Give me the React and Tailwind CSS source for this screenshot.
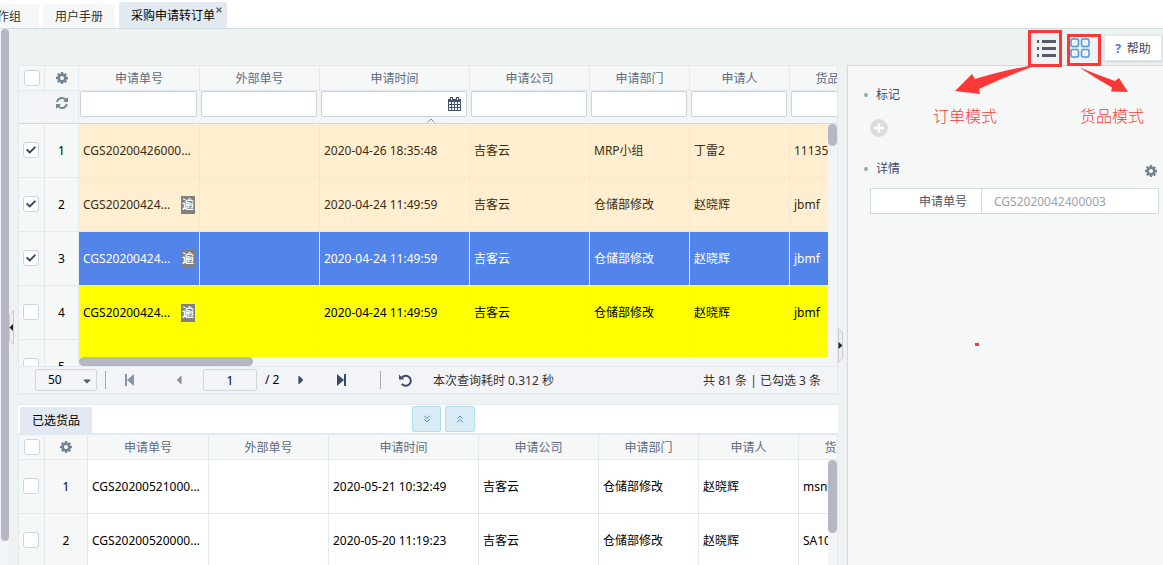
import { useState } from 'react'
import clsx from 'clsx'
import { FaCheck, FaCaretLeft, FaCaretRight, FaCaretDown, FaTimes } from 'react-icons/fa'
import { FiChevronsDown, FiChevronsUp } from 'react-icons/fi'

const COLUMNS = [
  { key: 'no', label: '申请单号', width: 'w-[121px]' },
  { key: 'outer', label: '外部单号', width: 'w-[120px]' },
  { key: 'time', label: '申请时间', width: 'w-[150px]', date: true },
  { key: 'company', label: '申请公司', width: 'w-[120px]' },
  { key: 'dept', label: '申请部门', width: 'w-[100px]' },
  { key: 'person', label: '申请人', width: 'w-[100px]' },
  { key: 'goods', label: '货品编号', width: 'w-[100px]' },
]

const ORDERS = [
  { no: 'CGS20200426000...', time: '2020-04-26 18:35:48', company: '吉客云', dept: 'MRP小组', person: '丁雷2', goods: '11135', checked: true, tone: 'bg-[#ffeecf] text-[#3d2c10]' },
  { no: 'CGS20200424...', time: '2020-04-24 11:49:59', company: '吉客云', dept: '仓储部修改', person: '赵晓辉', goods: 'jbmf', checked: true, overdue: true, tone: 'bg-[#ffeecf] text-[#3d2c10]' },
  { no: 'CGS20200424...', time: '2020-04-24 11:49:59', company: '吉客云', dept: '仓储部修改', person: '赵晓辉', goods: 'jbmf', checked: true, overdue: true, tone: 'bg-[#5284ea] text-white' },
  { no: 'CGS20200424...', time: '2020-04-24 11:49:59', company: '吉客云', dept: '仓储部修改', person: '赵晓辉', goods: 'jbmf', overdue: true, tone: 'bg-[#ffff00] text-black' },
  { tone: 'bg-[#ffff00] text-black' },
]

const SELECTED = [
  { no: 'CGS20200521000...', time: '2020-05-21 10:32:49', company: '吉客云', dept: '仓储部修改', person: '赵晓辉', goods: 'msnf', tone: 'bg-white text-black' },
  { no: 'CGS20200520000...', time: '2020-05-20 11:19:23', company: '吉客云', dept: '仓储部修改', person: '赵晓辉', goods: 'SA10', tone: 'bg-white text-black' },
]

function GearIcon({ className }) {
  return (
    <svg viewBox="128 128 1536 1536" fill="currentColor" className={className} aria-hidden="true">
      <path d="M1152 896q0-106-75-181t-181-75-181 75-75 181 75 181 181 75 181-75 75-181zm512-109v222q0 12-8 23t-20 13l-185 28q-19 54-39 91 35 50 107 138 10 12 10 25t-9 23q-27 37-99 108t-94 71q-12 0-26-9l-138-108q-44 23-91 38-16 136-29 186-7 28-36 28h-222q-14 0-24.5-8.5t-11.5-21.5l-28-184q-49-16-90-37l-141 107q-10 9-25 9-14 0-25-11-126-114-165-168-7-10-7-23 0-12 8-23 15-21 51-66.5t54-70.5q-27-50-41-99l-183-27q-13-2-21-12.5t-8-23.5v-222q0-12 8-23t19-13l186-28q14-46 39-92-40-57-107-138-10-12-10-24 0-10 9-23 26-36 98.5-107.5t94.5-71.5q13 0 26 10l138 107q44-23 91-38 16-136 29-186 7-28 36-28h222q14 0 24.5 8.5t11.5 21.5l28 184q49 16 90 37l142-107q9-9 24-9 13 0 25 10 129 119 165 170 7 8 7 22 0 12-8 23-15 21-51 66.5t-54 70.5q26 50 41 98l183 28q13 2 21 12.5t8 23.5z" />
    </svg>
  )
}

function RefreshIcon({ className }) {
  return (
    <svg viewBox="0 128 1536 1536" fill="currentColor" className={className} aria-hidden="true">
      <path d="M1511 1056q0 5-1 7-64 268-268 434.5t-478 166.5q-146 0-282.5-55t-243.5-157l-129 129q-19 19-45 19t-45-19-19-45v-448q0-26 19-45t45-19h448q26 0 45 19t19 45-19 45l-137 137q71 66 161 102t187 36q134 0 250-65t186-179q11-17 53-117 8-23 30-23h192q13 0 22.5 9.5t9.5 22.5zm25-800v448q0 26-19 45t-45 19h-448q-26 0-45-19t-19-45 19-45l138-138q-148-137-349-137-134 0-250 65t-186 179q-11 17-53 117-8 23-30 23h-199q-13 0-22.5-9.5t-9.5-22.5v-7q65-268 270-434.5t480-166.5q146 0 284 55.5t245 156.5l130-129q19-19 45-19t45 19 19 45z" />
    </svg>
  )
}

function CalendarIcon() {
  return (
    <svg viewBox="0 0 13 14" className="w-[13px] h-[14px]" aria-hidden="true">
      <path d="M0 2h13v12H0z" fill="#43506b" />
      <path d="M2 0h3v4H2zM8 0h3v4H8z" fill="#43506b" />
      <path d="M3 1h1v2H3zM9 1h1v2H9z" fill="#fff" />
      <path d="M1 5h2v2H1zM4 5h2v2H4zM7 5h2v2H7zM10 5h2v2h-2zM1 8h2v2H1zM4 8h2v2H4zM7 8h2v2H7zM10 8h2v2h-2zM1 11h2v2H1zM4 11h2v2H4zM7 11h2v2H7zM10 11h2v2h-2z" fill="#fff" />
    </svg>
  )
}

function CheckBox({ label, defaultChecked }) {
  return (
    <label className="inline-grid align-middle">
      <input
        type="checkbox"
        aria-label={label}
        defaultChecked={defaultChecked}
        className="peer col-start-1 row-start-1 w-4 h-4 appearance-none rounded-[3px] border border-[#cbd6da] bg-white"
      />
      <FaCheck className="col-start-1 row-start-1 place-self-center w-2.5 h-2.5 text-[#3d4a66] invisible peer-checked:visible pointer-events-none" />
    </label>
  )
}

function Grid({ name, rows, indexWidth, tableWidth, filters }) {
  return (
    <table className={clsx('table-fixed border-separate border-spacing-0', tableWidth)}>
      <thead className="text-[#5f6b7f]">
        <tr className="h-[25px] bg-[#f6f8f8]">
          <th className="w-[26px] p-0 border-r border-b border-[#e1eaf2] leading-none">
            <CheckBox label={`${name}全选`} />
          </th>
          <th className={clsx('p-0 border-r border-b border-[#e1eaf2]', indexWidth)}>
            <button aria-label="列设置" className="block mx-auto text-[#738491]">
              <GearIcon className="w-3 h-3" />
            </button>
          </th>
          {COLUMNS.map((col) => (
            <th key={col.key} className={clsx('p-0 pt-0.5 border-r border-b border-[#e1eaf2] font-normal leading-4', col.width)}>
              {col.label}
            </th>
          ))}
        </tr>
        {filters && (
          <tr className="h-[33px] bg-[#f3f4f7]">
            <td className="p-0 border-b border-[#cfd9dd]" />
            <td className="p-0 pb-2 border-r border-b border-r-[#e1eaf2] border-b-[#cfd9dd]">
              <button aria-label="刷新" className="block mx-auto text-[#738491]">
                <RefreshIcon className="w-3 h-3" />
              </button>
            </td>
            {COLUMNS.map((col) => (
              <td key={col.key} className="p-0 pl-px pr-[3px] align-top border-b border-[#cfd9dd]">
                <div className="relative">
                  <input
                    aria-label={`筛选${col.label}`}
                    className="block w-full h-[26px] px-1 rounded-xs border border-[#c9d6d9] bg-white"
                  />
                  {col.date && (
                    <button aria-label="选择日期" className="absolute right-1.5 top-1.5">
                      <CalendarIcon />
                    </button>
                  )}
                </div>
              </td>
            ))}
          </tr>
        )}
      </thead>
      <tbody>
        {rows.map((row, i) => (
          <tr key={i} className={clsx('h-[54px]', row.tone)}>
            <td className="p-0 pr-0.5 pb-0.5 text-center border-r border-b border-[#e1eaf2] bg-[#f6f8f8] leading-none">
              <CheckBox label={`选择第${i + 1}行`} defaultChecked={row.checked} />
            </td>
            <td className="p-0 text-center border-r border-b border-[#e1eaf2] bg-[#f6f8f8] text-black">{i + 1}</td>
            {COLUMNS.map((col) => (
              <td key={col.key} className="p-0 px-1 border-r border-b border-[#e1eaf2] whitespace-nowrap">
                {col.key === 'no' && row.overdue ? (
                  <div className="flex items-center justify-between">
                    <span>{row.no}</span>
                    <span className="w-3.5 h-[18px] leading-[18px] text-center font-bold text-white bg-[#808080]">逾</span>
                  </div>
                ) : (
                  row[col.key]
                )}
              </td>
            ))}
          </tr>
        ))}
      </tbody>
    </table>
  )
}

function TabBar() {
  return (
    <nav className="flex items-end h-[29px] shrink-0 overflow-hidden bg-white border-b border-[#cfdadd]">
      <button className="h-6 pt-0.5 -ml-1 pl-px pr-[18px] mr-1 bg-[#f6f8f8] text-[#333]">作组</button>
      <button className="h-6 pt-0.5 px-3 mr-1 bg-[#f6f8f8] text-[#333]">用户手册</button>
      <div className="relative h-[26px] pt-0.5 px-3 flex items-center rounded-t-xs bg-[#e3e9f0] text-black">
        <button>采购申请转订单</button>
        <button aria-label="关闭" className="absolute right-1 top-1 text-[#5d6b78]">
          <FaTimes className="w-2 h-2" />
        </button>
      </div>
    </nav>
  )
}

function Toolbar() {
  return (
    <div className="flex items-start justify-end h-9 shrink-0">
      <button aria-label="订单模式" className="w-[34px] h-[37px] mt-px mr-[5px] pl-0.5 pb-0.5 grid place-items-center border-3 border-[#fb3838] relative z-10">
        <svg viewBox="0 0 19 18" className="w-[19px] h-[18px]" fill="#525c66">
          <path d="M0 1h2v3H0zM5 1h14v3H5zM0 8h2v3H0zM5 8h14v3H5zM0 15h2v3H0zM5 15h14v3H5z" />
        </svg>
      </button>
      <button aria-label="货品模式" className="w-[34px] h-8 mt-[5px] mr-[3px] pr-2 pb-1 grid place-items-center border-3 border-[#fb3838] relative z-10">
        <svg viewBox="0 0 20 20" className="w-5 h-5" fill="none" stroke="#4a97dc" strokeWidth="1.5">
          <rect x="1" y="1" width="7.5" height="7.5" rx="1.5" />
          <rect x="11.5" y="1" width="7.5" height="7.5" rx="1.5" />
          <rect x="1" y="11.5" width="7.5" height="7.5" rx="1.5" />
          <rect x="11.5" y="11.5" width="7.5" height="7.5" rx="1.5" />
        </svg>
      </button>
      <button className="flex items-center justify-center gap-1.5 w-[58px] h-[26px] pt-0.5 mt-1.5 mr-px bg-white border border-[#dfe6e9] shadow-sm text-[#3f4a55]">
        <span className="font-bold text-[#4a76e8]">?</span>
        帮助
      </button>
    </div>
  )
}

function Pager() {
  return (
    <div className="flex items-center h-[26px] pl-4 pr-4 bg-[#f3f4f7] text-[#333]">
      <div className="relative">
        <select aria-label="每页条数" className="block appearance-none w-[62px] h-[22px] pl-3 rounded-xs border border-[#cfd9dd] bg-transparent text-black">
          <option>50</option>
        </select>
        <FaCaretDown className="absolute right-1 top-1.5 w-3 h-3 text-[#525c66] pointer-events-none" />
      </div>
      <span className="w-px h-[18px] ml-2 bg-[#a4a9b3]" />
      <button aria-label="首页" className="w-6 ml-[11px] grid place-items-center text-[#8b93a5]">
        <svg viewBox="0 0 9 12" className="w-[9px] h-3" fill="currentColor">
          <path d="M0 0h2v12H0zM9 0v12L2 6z" />
        </svg>
      </button>
      <button aria-label="上一页" className="w-6 ml-[26px] grid place-items-center text-[#8b93a5]">
        <FaCaretLeft className="w-3 h-3.5" />
      </button>
      <input aria-label="页码" defaultValue="1" className="w-[54px] h-[22px] ml-3 text-center text-black rounded-xs border border-[#cfd9dd]" />
      <span className="w-4 ml-2 whitespace-nowrap text-black">/ 2</span>
      <button aria-label="下一页" className="w-6 ml-2 grid place-items-center text-[#3d4a66]">
        <FaCaretRight className="w-3 h-3.5" />
      </button>
      <button aria-label="末页" className="w-6 ml-4 grid place-items-center text-[#3d4a66]">
        <svg viewBox="0 0 9 12" className="w-[9px] h-3" fill="currentColor">
          <path d="M7 0h2v12H7zM0 0v12l7-6z" />
        </svg>
      </button>
      <span className="w-px h-[18px] ml-[27px] bg-[#a4a9b3]" />
      <button aria-label="重新查询" className="w-6 ml-3 grid place-items-center text-[#3d4a66]">
        <svg viewBox="0 0 13 13" className="w-[13px] h-[13px]">
          <path d="M3 3.5A5 5 0 1 1 2.8 9.8" fill="none" stroke="currentColor" strokeWidth="2" />
          <path d="M0 0.5v5h5.2z" fill="currentColor" />
        </svg>
      </button>
      <span className="ml-4 pt-0.5">本次查询耗时 0.312 秒</span>
      <span className="ml-auto pt-0.5">共 81 条 | 已勾选 3 条</span>
    </div>
  )
}

// 面板之间的折叠把手
function Splitter({ side }) {
  const left = side === 'left'
  return (
    <div className={clsx('relative w-[9px] shrink-0', left ? 'pt-[245px]' : 'pt-[263px]')}>
      <button aria-label={left ? '收起左侧' : '收起右侧'} className="block">
        <svg viewBox="0 0 5 35" className="w-[5px] h-[35px]">
          {left ? (
            <>
              <path d="M4.5 0.5v34L.5 30V5z" fill="#eceef0" stroke="#c9ccd0" />
              <path d="M4 14v7L.5 17.5z" fill="#222" />
            </>
          ) : (
            <>
              <path d="M.5.5v34l4-4.5V5z" fill="#eceef0" stroke="#c9ccd0" />
              <path d="M.5 14v7L4.5 17.5z" fill="#222" />
            </>
          )}
        </svg>
      </button>
    </div>
  )
}

function DetailPanel() {
  return (
    <aside className="w-[316px] shrink-0 pt-[21px] pl-4 border-t border-l border-[#cfdadd] bg-[#f6f8f8] text-[#3f4a66]">
      <h2 className="flex items-center gap-2 leading-4">
        <span className="w-1 h-1 rounded-full bg-[#9aa7b3]" />
        标记
      </h2>
      <button aria-label="添加标记" className="block mt-4 ml-1.5">
        <svg viewBox="0 0 18 18" className="w-[18px] h-[18px]">
          <circle cx="9" cy="9" r="9" fill="#d9dddd" />
          <path d="M9 4v10M4 9h10" stroke="#fff" strokeWidth="2.5" />
        </svg>
      </button>
      <div className="flex items-center justify-between mt-6 pr-1.5">
        <h2 className="flex items-center gap-2 leading-4">
          <span className="w-1 h-1 rounded-full bg-[#9aa7b3]" />
          详情
        </h2>
        <button aria-label="详情设置" className="text-[#738491] mt-1">
          <GearIcon className="w-3 h-3" />
        </button>
      </div>
      <div className="flex mt-[11px] ml-1.5 mr-1 h-[26px] border border-[#cfdadd] bg-white">
        <label htmlFor="apply-no" className="w-[111px] pr-3.5 pt-px text-right leading-6 border-r border-[#cfdadd] text-[#4c5561]">
          申请单号
        </label>
        <input id="apply-no" readOnly defaultValue="CGS2020042400003" className="flex-1 min-w-0 px-3 pt-0.5 text-[#98a2ab]" />
      </div>
    </aside>
  )
}

// 说明箭头与文字，浮在页面右上角
function Notes() {
  return (
    <div className="absolute top-[60px] right-0 w-[243px] h-[300px] pointer-events-none text-[#fb3838] text-base leading-5 font-light font-['Noto_Sans_CJK_SC',sans-serif]">
      <svg viewBox="920 60 243 300" className="absolute inset-0 w-full h-full" fill="#fb3838">
        <path d="M955 91l17-17 3 5q30-9 54-13l3 1q-28 10-53 22l1 5z" />
        <path d="M1081 68q17 7 34 13l4-3 9 14-17-.5 1-4q-16-9-31-19z" />
        <path d="M975 343h4v3h-4z" />
      </svg>
      <span className="absolute left-[13px] top-[45px]">订单模式</span>
      <span className="absolute left-[160px] top-[45px]">货品模式</span>
    </div>
  )
}

export default function App() {
  const [expanded, setExpanded] = useState(true)

  return (
    <div className="relative flex flex-col h-screen overflow-hidden bg-[#eef2f3] text-xs font-['Noto_Sans','Noto_Sans_CJK_SC',sans-serif]">
      <TabBar />
      <div className="flex flex-1 min-h-0">
        <div className="w-[9px] shrink-0 pl-px pb-6 bg-[#f3f4f7]">
          <div className="h-full rounded-full bg-[#b5b8c2]" />
        </div>
        <div className="flex flex-col flex-1 min-w-0">
          <Toolbar />
          <div className="flex flex-1 min-h-0">
            <Splitter side="left" />
            <main className="flex flex-col flex-1 min-w-0">
              <section className="shrink-0 border border-b-2 border-[#e1eaf2]">
                <div className="relative h-[300px] overflow-hidden bg-[#f3f4f7]">
                  <Grid name="申请单" rows={ORDERS} indexWidth="w-[34px]" tableWidth="w-[871px]" filters />
                  <svg viewBox="0 0 8 5" className="absolute left-1/2 -ml-px top-[52px] w-2 h-[5px]" fill="none" stroke="#8d979e">
                    <path d="M.5 4.5L4 1l3.5 3.5" />
                  </svg>
                  <div className="absolute right-0 top-[58px] bottom-0 w-[9px] bg-[#f3f4f7]">
                    <div className="h-[22px] rounded-full bg-[#b5b8c2]" />
                  </div>
                  <div className="absolute left-[60px] right-0 bottom-0 h-[9px] bg-[#f3f4f7]">
                    <div className="w-[174px] h-full rounded-full bg-[#b5b8c2]" />
                  </div>
                </div>
                <div className="border-t border-[#e1eaf2]">
                  <Pager />
                </div>
              </section>

              <section className="flex flex-col flex-1 min-h-0 mt-[9px] border-t border-[#e1eaf2] bg-white">
                <div className="relative flex items-end h-[30px] shrink-0 pl-0.5 border-b-2 border-[#e1eaf2]">
                  <button className="h-[26px] pt-0.5 px-3 rounded-t-xs bg-[#e3e9f0] text-black">已选货品</button>
                  <div className="absolute left-1/2 -translate-x-4 top-px flex gap-1 text-[#5b87a8]">
                    <button
                      aria-label="展开"
                      aria-pressed={expanded}
                      onClick={() => setExpanded(true)}
                      className="w-[29px] h-[26px] grid place-items-center rounded-xs border border-[#b3e0ea] bg-[#d9ebf5]"
                    >
                      <FiChevronsDown className="w-3 h-3" />
                    </button>
                    <button
                      aria-label="收起"
                      aria-pressed={!expanded}
                      onClick={() => setExpanded(false)}
                      className="w-[30px] h-[26px] grid place-items-center rounded-xs border border-[#b3e0ea] bg-[#d9ebf5]"
                    >
                      <FiChevronsUp className="w-3 h-3" />
                    </button>
                  </div>
                </div>
                <div className="relative flex-1 min-h-0 overflow-hidden border-x border-[#e1eaf2]">
                  <Grid name="已选货品" rows={SELECTED} indexWidth="w-[43px]" tableWidth="w-[880px]" />
                  <div className="absolute right-0 top-[25px] bottom-0 w-[9px] bg-[#f3f4f7]">
                    <div className="h-[73px] rounded-full bg-[#b5b8c2]" />
                  </div>
                </div>
              </section>
            </main>
            <Splitter side="right" />
            <DetailPanel />
          </div>
        </div>
      </div>
      <Notes />
    </div>
  )
}
